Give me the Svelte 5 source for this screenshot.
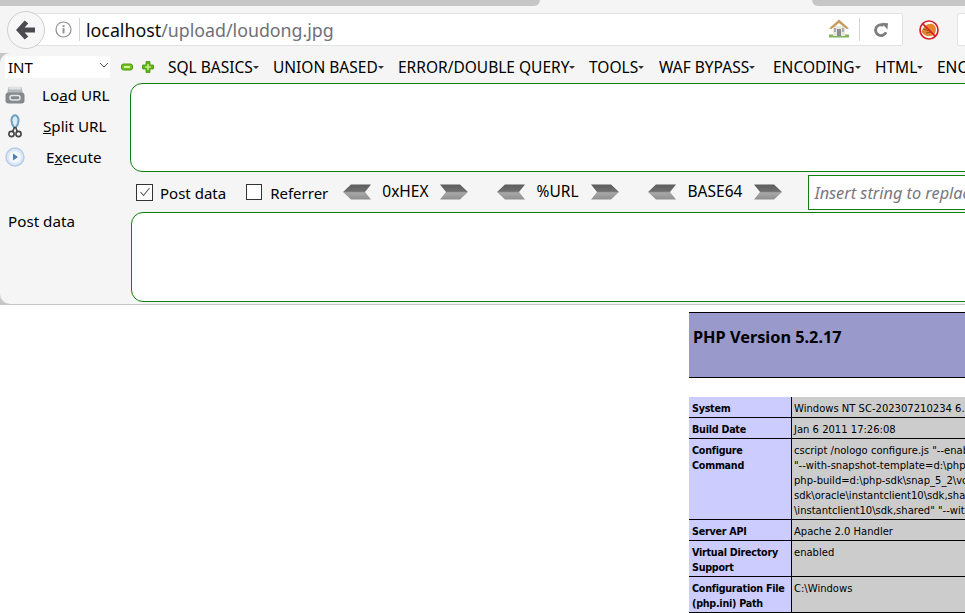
<script>
  const menu = [['SQL BASICS',105],['UNION BASED',125],['ERROR/DOUBLE QUERY',191],['TOOLS',70],['WAF BYPASS',114],['ENCODING',102],['HTML',62],['ENCRYPTION',110]];
  const codecs = ['0xHEX','%URL','BASE64'];
  const rows = [
    ['System',['Windows NT SC-202307210234 6.1 build 7601']],
    ['Build Date',['Jan 6 2011 17:26:08']],
    ['Configure Command',['cscript /nologo configure.js "--enable-snapshot-build"','"--with-snapshot-template=d:\\php-sdk\\snap_5_2','php-build=d:\\php-sdk\\snap_5_2\\vc6\\x86\\php_build','sdk\\oracle\\instantclient10\\sdk,shared" "--with-oci8','\\instantclient10\\sdk,shared" "--with-enchant=shared"']],
    ['Server API',['Apache 2.0 Handler']],
    ['Virtual Directory Support',['enabled']],
    ['Configuration File (php.ini) Path',['C:\\Windows']]
  ];
</script>

<div class="page">
  <div class="tabstrip"><div class="tab-l"></div><div class="tab-r"></div></div>

  <div class="navbar">
    <div class="back">
      <svg width="20" height="20" viewBox="0 0 20 20"><path d="M10.5 2 L3.2 10 L10.5 18 M4 10 H19" fill="none" stroke="#4a4a4f" stroke-width="4.8"/></svg>
    </div>
    <div class="urlbar">
      <svg class="info" width="17" height="17" viewBox="0 0 17 17"><circle cx="8.5" cy="8.5" r="7.5" fill="none" stroke="#8f8f8f" stroke-width="1.2"/><rect x="7.6" y="7.2" width="1.9" height="5.2" fill="#8f8f8f"/><rect x="7.6" y="4.2" width="1.9" height="1.9" fill="#8f8f8f"/></svg>
      <span class="sep"></span>
      <span class="url"><span class="host">localhost</span>/upload/loudong.jpg</span>
      <svg class="home" width="20" height="19" viewBox="0 0 20 19">
        <rect x="0" y="15.5" width="20" height="3" fill="#7fb35c"/>
        <rect x="4" y="7" width="12" height="10" fill="#e9e6dc"/>
        <rect x="8" y="10" width="4" height="7" fill="#8a8f96"/>
        <rect x="5" y="9" width="2" height="4" fill="#a9adb2"/><rect x="13" y="9" width="2" height="4" fill="#a9adb2"/>
        <path d="M0 9.5 L10 0.5 L20 9.5 L17.5 10 L10 4 L2.5 10 Z" fill="#c79a5e"/>
      </svg>
      <span class="sep2"></span>
      <svg class="reload" width="16" height="16" viewBox="0 0 16 16"><path d="M13 10.2 A5.4 5.4 0 1 1 10.6 3.4" fill="none" stroke="#7d7d7d" stroke-width="2.8"/><path d="M8.6 0.8 L15 1.2 L14.4 7.6 Z" fill="#7d7d7d"/></svg>
    </div>
    <svg class="noscript" width="20" height="20" viewBox="0 0 20 20">
      <circle cx="10" cy="10" r="9" fill="#fff"/>
      <path d="M2.5 12 C4 6 9 3 13.5 4 C17 5.5 18 10 15.5 14 C12 17.5 6 17 2.5 12 Z" fill="#e5842a"/>
      <path d="M4 9 L9 10.5 M7 13 L12 12" stroke="#8a5a20" stroke-width="1" fill="none"/>
      <circle cx="10" cy="10" r="9" fill="none" stroke="#d8202a" stroke-width="1.7"/>
      <path d="M3.8 3.8 L16.2 16.2" stroke="#d8202a" stroke-width="1.7"/>
    </svg>
    <div class="stub"></div>
  </div>

  <div class="hackwrap">
    <div class="hack">
      <div class="menurow">
        <div class="select"><span>INT</span>
          <svg width="10" height="6" viewBox="0 0 10 6"><path d="M1 1 L5 5 L9 1" fill="none" stroke="#555" stroke-width="1"/></svg>
        </div>
        <svg class="pm" width="12" height="8" viewBox="0 0 12 8"><rect x="0.5" y="1" width="11" height="6" rx="2" fill="#6fc21a" stroke="#4f9a10"/><rect x="3" y="3" width="6" height="2" fill="#d8f0a8"/></svg>
        <svg class="pm2" width="12" height="12" viewBox="0 0 12 12"><path d="M4 0.5 H8 V4 H11.5 V8 H8 V11.5 H4 V8 H0.5 V4 H4 Z" fill="#5db512" stroke="#4a960c" stroke-width="0.8"/><path d="M5.2 3 H6.8 V5.2 H9 V6.8 H6.8 V9 H5.2 V6.8 H3 V5.2 H5.2 Z" fill="#c6ea8e"/></svg>
        <div class="menu">
          {#each menu as [m, w]}
            <span class="mi" style="width: {w}px">{m}<i></i></span>
          {/each}
        </div>
      </div>

      <div class="urlrow">
        <div class="actions">
          <div class="act">
            <svg width="20" height="18" viewBox="0 0 20 18"><path d="M3.5 1 H16.5 L18 8 H2 Z" fill="#b4b9bd"/><rect x="4" y="0.5" width="12" height="3" fill="#e0e2e4"/><rect x="0.5" y="6.5" width="19" height="11" rx="3" fill="#84898c"/><rect x="5" y="9.5" width="10" height="4.5" rx="2" fill="none" stroke="#e3e5e6" stroke-width="1.5"/></svg>
            <span class="lbl l1">Lo<u>a</u>d URL</span>
          </div>
          <div class="act">
            <svg width="20" height="24" viewBox="0 0 20 24"><path d="M10 1 C5 3 5.5 9 9.6 14 M10 1 C15 3 14.5 9 10.4 14" fill="#dbe8f0" stroke="#6fa3c4" stroke-width="2"/><path d="M9.5 13 L7.5 18 M10.5 13 L12.5 18" stroke="#444" stroke-width="1.6"/><circle cx="6.5" cy="20" r="2.6" fill="none" stroke="#444" stroke-width="1.6"/><circle cx="13.5" cy="20" r="2.6" fill="none" stroke="#444" stroke-width="1.6"/></svg>
            <span class="lbl l2"><u>S</u>plit URL</span>
          </div>
          <div class="act">
            <svg width="20" height="20" viewBox="0 0 20 20"><circle cx="10" cy="10" r="9" fill="#dce8f7" stroke="#b5cbe8" stroke-width="1.4"/><circle cx="10" cy="10" r="6" fill="#f4f8fd"/><path d="M8 6.5 L13 10 L8 13.5 Z" fill="#4a7fc4"/></svg>
            <span class="lbl l3">E<u>x</u>ecute</span>
          </div>
        </div>
        <div class="ta ta1"></div>
      </div>

      <div class="optrow">
        <span class="cb on"><svg width="14" height="14" viewBox="0 0 14 14"><path d="M2.5 7 L5.5 10.5 L11.5 3" fill="none" stroke="#555" stroke-width="1.1"/></svg></span>
        <span class="optl o1">Post data</span>
        <span class="cb"></span>
        <span class="optl o2">Referrer</span>
        {#each codecs as c, i}
          <span class="codec c{i}">
            <svg width="28" height="16" viewBox="0 0 28 16"><defs><linearGradient id="gl{i}" x1="0" y1="0" x2="0" y2="1"><stop offset="0" stop-color="#5c5c5c"/><stop offset="0.45" stop-color="#6e6e6e"/><stop offset="0.55" stop-color="#a8a8a8"/><stop offset="1" stop-color="#8f8f8f"/></linearGradient></defs><path d="M8 0.5 H28 L22 8 L28 15.5 H8 L0 8 Z" fill="url(#gl{i})"/></svg>
            <span class="cname">{c}</span>
            <svg width="28" height="16" viewBox="0 0 28 16"><path d="M20 0.5 H0 L6 8 L0 15.5 H20 L28 8 Z" fill="url(#gl{i})"/></svg>
          </span>
        {/each}
        <div class="replace">Insert string to replace</div>
      </div>

      <div class="postrow">
        <span class="postl">Post data</span>
        <div class="ta ta2"></div>
      </div>
    </div>
  </div>

  <div class="php">
    <div class="phphead"><h1>PHP Version 5.2.17</h1></div>
    <table>
      <tbody>
        {#each rows as r}
          <tr>
            <td class="e">{r[0]}</td>
            <td class="v">{#each r[1] as l}<div>{l}</div>{/each}</td>
          </tr>
        {/each}
      </tbody>
    </table>
  </div>
</div>

<style>
  :global(body) { margin: 0; overflow: hidden; background: #fff; }
  .page { width: 965px; height: 613px; overflow: hidden; font-family: "Noto Sans", "Open Sans", sans-serif; color: #000; }

  .tabstrip { height: 6px; display: flex; justify-content: space-between; background: #f5f5f5; }
  .tab-l { width: 540px; background: #c6c6c6; border-bottom-right-radius: 8px; }
  .tab-r { width: 153px; background: #c6c6c6; border-bottom-left-radius: 8px; }

  .navbar { height: 47px; background: #f5f5f5; display: flex; align-items: center; padding-left: 7px; box-sizing: border-box; }
  .back { width: 36px; height: 36px; border: 1px solid #cfcfcf; border-radius: 50%; background: #f7f7f7; display: flex; align-items: center; justify-content: center; position: relative; z-index: 1; flex: none; }
  .urlbar { margin-left: -15px; width: 873px; height: 33px; background: #fff; border: 1px solid #e2e2e2; border-radius: 2px; display: flex; align-items: center; box-sizing: border-box; padding-left: 24px; flex: none; }
  .info { flex: none; }
  .sep { width: 1px; height: 23px; background: #d5d5d5; margin-left: 7px; flex: none; }
  .url { margin-left: 6px; font-size: 17.8px; color: #6e7078; white-space: nowrap; flex: 1; }
  .host { color: #0c0c0d; }
  .home { flex: none; margin: -2px 10px 0 0; }
  .sep2 { width: 1px; height: 23px; background: #d5d5d5; flex: none; }
  .reload { flex: none; margin: 0 13px; }
  .noscript { flex: none; margin-left: 16px; }
  .stub { width: 40px; height: 33px; margin-left: 18px; background: #fff; border: 1px solid #e2e2e2; border-radius: 2px; box-sizing: border-box; flex: none; }

  .hackwrap { height: 252px; background: #c6c6c6; padding-bottom: 1px; box-sizing: border-box; }
  .hack { height: 251px; background: #f5f5f5; border-radius: 10px 0 0 10px; padding-top: 3px; box-sizing: border-box; overflow: hidden; font-size: 15.2px; }

  .menurow { height: 22px; display: flex; align-items: center; white-space: nowrap; }
  .select { width: 105px; height: 22px; margin-left: 5px; background: #fff; display: flex; align-items: center; justify-content: space-between; padding: 0 1px 0 3px; box-sizing: border-box; flex: none; font-size: 15px; }
  .select svg { margin-top: -5px; }
  .pm { margin-left: 11px; flex: none; }
  .pm2 { margin-left: 9px; flex: none; }
  .menu { display: flex; margin-left: 14px; flex: none; font-size: 15.5px; }
  .mi { display: inline-flex; align-items: center; flex: none; }
  .mi i { width: 0; height: 0; border: 3px solid transparent; border-top: 3px solid #333; border-bottom: 0; margin-left: 0; }

  .urlrow { display: flex; margin-top: 5px; height: 89px; }
  .actions { width: 130px; flex: none; margin-top: -4px; }
  .act { height: 31px; display: flex; align-items: center; padding-left: 5px; }
  .act svg { flex: none; }
  .lbl { white-space: nowrap; }
  .l1 { margin-left: 17px; }
  .l2 { margin-left: 18px; }
  .l3 { margin-left: 21px; }
  .ta { background: #fff; border: 1px solid #0f7f0f; border-radius: 12px 0 0 12px; box-sizing: border-box; width: 900px; flex: none; }
  .ta1 { height: 89px; }

  .optrow { display: flex; align-items: center; height: 40px; white-space: nowrap; }
  .cb { width: 16px; height: 16px; border: 1px solid #333; box-sizing: border-box; background: #fff; flex: none; display: flex; align-items: center; justify-content: center; }
  .cb.on { margin-left: 136px; width: 17px; height: 17px; }
  .optl { font-size: 15px; padding-top: 1px; }
  .o1 { margin-left: 7px; }
  .cb:not(.on) { margin-left: 20px; }
  .o2 { margin-left: 8px; }
  .codec { display: inline-flex; align-items: center; flex: none; }
  .c0 { margin-left: 15px; }
  .c0 .cname { margin-left: 11px; margin-right: 11px; }
  .c1 { margin-left: 29px; }
  .c2 { margin-left: 29px; }
  .cname { margin: -3px 12px 0; font-size: 15.5px; }
  .replace { margin-left: 26px; width: 300px; height: 35px; flex: none; background: #fff; border: 1px solid #0f7f0f; box-sizing: border-box; display: flex; align-items: center; padding: 1px 0 0 5px; font-style: italic; color: #77777f; font-size: 16.3px; }

  .postrow { display: flex; height: 90px; }
  .postl { width: 131px; flex: none; padding-left: 8px; box-sizing: border-box; line-height: 18px; }
  .ta2 { height: 90px; }

  .php { margin: 7px 0 0 689px; width: 400px; font-family: "DejaVu Sans", Verdana, sans-serif; }
  .phphead { height: 66px; background: #9999cc; border-top: 1px solid #000; border-bottom: 1px solid #000; box-sizing: border-box; padding: 14px 0 0 4px; }
  h1 { margin: 0; font-size: 16.3px; line-height: 20px; font-weight: bold; font-family: "Noto Sans", sans-serif; white-space: nowrap; }
  table { border-collapse: collapse; margin-top: 19px; font-size: 10px; table-layout: fixed; width: 400px; }
  td { padding: 4px 3px 1px; line-height: 15px; vertical-align: top; border: 1px solid #000; border-top: 0; border-left: 0; }
  .e { width: 96px; background: #ccccff; font-weight: bold; font-size: 9.6px; letter-spacing: -0.25px; }
  .v { background: #cccccc; white-space: nowrap; overflow: hidden; padding-left: 2px; }
</style>
